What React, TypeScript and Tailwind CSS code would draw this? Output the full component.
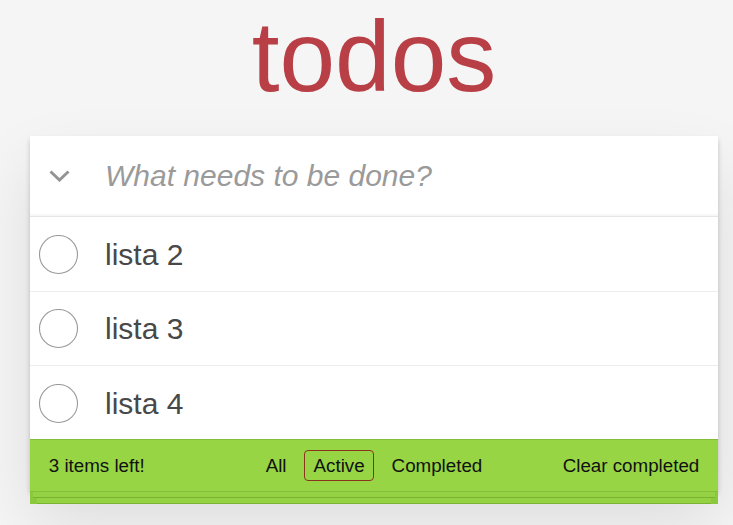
import React from "react";

const TODOS = ["lista 2", "lista 3", "lista 4"];
const FILTERS = ["All", "Active", "Completed"];

export default function App() {
  return (
    <div className="min-h-screen bg-[#f5f5f5] font-['Liberation_Sans',Arial,sans-serif] text-[#111]">
      <div className="ml-[30px] w-[688px] pt-[6px]">
        <h1 className="h-[100px] text-center text-[100px] leading-[100px] font-normal text-[#b83f45]">todos</h1>

        {/* card */}
        <div className="mt-[30px] bg-white shadow-[0_2.5px_5px_0_rgba(0,0,0,0.2),0_31px_62px_0_rgba(0,0,0,0.1)]">
          <div className="flex h-[80px] items-start shadow-[inset_0_-2px_1px_rgba(0,0,0,0.03)]">
            <div className="flex h-full w-[75px] items-center pl-[19px]">
              <svg width="21" height="12" viewBox="0 0 21 12">
                <path d="M1.5 1.5 L10.5 10 L19.5 1.5" fill="none" stroke="#949494" strokeWidth="3" strokeLinejoin="miter" />
              </svg>
            </div>
            <input
              className="min-w-0 flex-1 bg-transparent pt-[19px] pr-[20px] text-[30px] leading-[42px] text-[#484848] outline-none placeholder:italic placeholder:text-[#9a9a9a]"
              placeholder="What needs to be done?"
            />
          </div>

          <ul className="border-t border-[#e6e6e6]">
            {TODOS.map((t, i) => (
              <li
                key={t}
                className={`flex items-center pt-[2px] ${i < TODOS.length - 1 ? "h-[74.5px] border-b border-[#ededed]" : "h-[73px]"}`}
              >
                <div className="flex w-[75px] items-center pl-[9px]">
                  <svg width="40" height="40" viewBox="0 0 40 40">
                    <circle cx="19.5" cy="19.5" r="19" fill="none" stroke="#9a9a9a" strokeWidth="1.1" />
                  </svg>
                </div>
                <span className="text-[30px] leading-[36px] text-[#484848]">{t}</span>
              </li>
            ))}
          </ul>

          {/* footer */}
          <div className="grid h-[52px] grid-cols-[1fr_auto_1fr] items-center border-t border-[#84bd3a] bg-[#97d544] px-[18.75px] text-[18.75px] leading-[21px] text-[#111]">
            <span>3 items left!</span>
            <ul className="flex">
              {FILTERS.map((f) => (
                <li key={f}>
                  <span
                    className={`mx-[3.75px] block rounded-[4px] border-[1.25px] px-[8.75px] py-[3.75px] ${
                      f === "Active" ? "border-[#8a3420]" : "border-transparent"
                    }`}
                  >
                    {f}
                  </span>
                </li>
              ))}
            </ul>
            <span className="text-right">Clear completed</span>
          </div>
        </div>

        {/* stacked sheets under the footer */}
        <div className="h-[13px] border-t border-[#86bf3a] bg-[#8cc83d]">
          <div className="mx-[3px] h-[6px] border-b border-[#7bb232] bg-[#94d243]" />
          <div className="mx-[7px] h-[6px] border-b border-[#7bb232] bg-[#94d243]" />
        </div>
      </div>
    </div>
  );
}
